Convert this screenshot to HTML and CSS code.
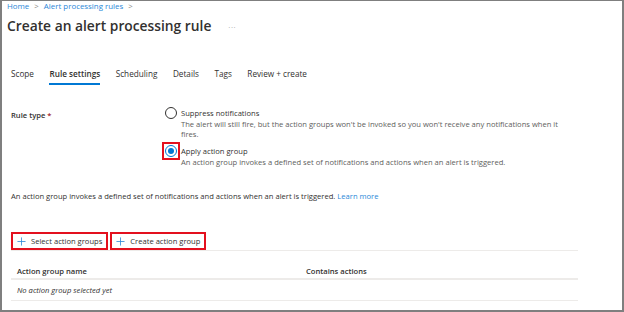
FILE: index.html
```
<!DOCTYPE html>
<html lang="en">
<head>
    <meta charset="UTF-8">
    <meta name="viewport" content="width=device-width, initial-scale=1.0">
    <title>Create an alert processing rule</title>
    <link rel="stylesheet" href="styles.css">
</head>
<body>
    <div class="page">
        <div class="breadcrumb">
            <a href="#">Home</a>
            <span class="sep">&gt;</span>
            <a href="#">Alert processing rules</a>
            <span class="sep">&gt;</span>
        </div>

        <div class="title-row">
            <h1>Create an alert processing rule</h1>
            <span class="more">&middot;&middot;&middot;</span>
        </div>

        <div class="tabs">
            <div class="tab">Scope</div>
            <div class="tab active">Rule settings</div>
            <div class="tab">Scheduling</div>
            <div class="tab">Details</div>
            <div class="tab">Tags</div>
            <div class="tab">Review + create</div>
        </div>

        <div class="content">
            <div class="field">
                <div class="field-label">Rule type <span class="required">*</span></div>
                <div class="options">
                    <div class="option">
                        <span class="radio"></span>
                        <div class="option-text">
                            <div class="option-label">Suppress notifications</div>
                            <div class="option-desc">The alert will still fire, but the action groups won't be invoked so you won't receive any notifications when it fires.</div>
                        </div>
                    </div>
                    <div class="option">
                        <span class="highlight"><span class="radio checked"></span></span>
                        <div class="option-text">
                            <div class="option-label">Apply action group</div>
                            <div class="option-desc">An action group invokes a defined set of notifications and actions when an alert is triggered.</div>
                        </div>
                    </div>
                </div>
            </div>

            <p class="info">An action group invokes a defined set of notifications and actions when an alert is triggered. <a href="#">Learn more</a></p>

            <div class="toolbar">
                <button class="cmd">
                    <svg viewBox="0 0 10 10" width="9" height="9"><path d="M5 0.5v9M0.5 5h9" stroke="#2b88d8" stroke-width="0.9"/></svg>
                    Select action groups
                </button>
                <button class="cmd">
                    <svg viewBox="0 0 10 10" width="9" height="9"><path d="M5 0.5v9M0.5 5h9" stroke="#2b88d8" stroke-width="0.9"/></svg>
                    Create action group
                </button>
            </div>

            <div class="grid">
                <div class="grid-row head">
                    <div class="cell">Action group name</div>
                    <div class="cell">Contains actions</div>
                </div>
                <div class="grid-row">
                    <div class="cell empty">No action group selected yet</div>
                    <div class="cell"></div>
                </div>
            </div>
        </div>
    </div>
</body>
</html>
```

FILE: styles.css
```
body {
    margin: 0;
    background: #7f7f7f;
    height: 312px;
    overflow: hidden;
    font-family: "Segoe UI", "Open Sans", sans-serif;
    color: #323130;
}

.page {
    background: #fff;
    margin: 1px 2px 0 2px;
    height: 309px;
    padding-left: 5px;
    box-sizing: border-box;
    overflow: hidden;
}

a {
    color: #2b88d8;
    text-decoration: none;
}

.breadcrumb {
    font-size: 7.9px;
    line-height: 10px;
    display: flex;
    gap: 5px;
}

.breadcrumb .sep {
    color: #8a8886;
}

.title-row {
    display: flex;
    align-items: center;
    margin-top: 6px;
}

h1 {
    margin: 0;
    font-size: 13.8px;
    font-weight: 600;
    line-height: 18px;
}

.more {
    margin-left: 17px;
    color: #a19f9d;
    font-size: 8px;
    letter-spacing: 0.5px;
}

.tabs {
    display: flex;
    gap: 15.5px;
    margin-top: 34px;
    padding-left: 4px;
}

.tab {
    font-size: 8.2px;
    line-height: 10px;
    padding-bottom: 4px;
    border-bottom: 2px solid transparent;
}

.tab.active {
    font-weight: 600;
    border-bottom-color: #0078d4;
}

.content {
    padding-left: 4px;
    font-size: 7.6px;
}

.field {
    display: grid;
    grid-template-columns: 154px 1fr;
    margin-top: 23px;
}

.field-label {
    font-weight: 600;
    padding-top: 2px;
    line-height: 10px;
}

.required {
    color: #a4262c;
}

.options {
    display: flex;
    flex-direction: column;
    gap: 6.5px;
}

.option {
    display: flex;
    gap: 4px;
}

.radio {
    flex: none;
    display: block;
    width: 12px;
    height: 12px;
    margin-top: -1px;
    border: 1px solid #323130;
    border-radius: 50%;
    box-sizing: border-box;
    position: relative;
}

.radio.checked {
    border-color: #0078d4;
}

.radio.checked::after {
    content: "";
    position: absolute;
    left: 2px;
    top: 2px;
    width: 6px;
    height: 6px;
    border-radius: 50%;
    background: #0078d4;
}

/* red annotation box drawn over the selected radio */
.highlight {
    flex: none;
    position: relative;
    height: 11px;
}

.highlight::before {
    content: "";
    position: absolute;
    left: -3px;
    top: -4px;
    width: 14px;
    height: 14px;
    border: 2px solid #e3101e;
}

.option-label {
    line-height: 10px;
}

.option-desc {
    color: #605e5c;
    line-height: 10.5px;
    max-width: 386px;
    padding-top: 0.5px;
}

.info {
    margin: 24px 0 0 0;
    line-height: 10px;
}

.toolbar {
    display: flex;
    gap: 2px;
    margin-top: 31px;
}

.cmd {
    display: flex;
    align-items: center;
    gap: 5px;
    height: 18px;
    padding: 0 4px 0 4px;
    border: 2px solid #e3101e;
    background: #fff;
    font-family: inherit;
    font-size: 7.6px;
    color: #323130;
}

.grid {
    width: 567px;
    border-top: 1px solid #edebe9;
}

.grid-row {
    display: grid;
    grid-template-columns: 289px 1fr;
    border-bottom: 1px solid #edebe9;
    height: 20px;
    align-items: center;
}

.grid-row.head {
    height: 29px;
    padding-top: 12px;
    box-sizing: border-box;
    border-bottom: 2px solid #edebe9;
    font-weight: 600;
}

.cell {
    padding-left: 6px;
}

.empty {
    font-style: italic;
}
```
